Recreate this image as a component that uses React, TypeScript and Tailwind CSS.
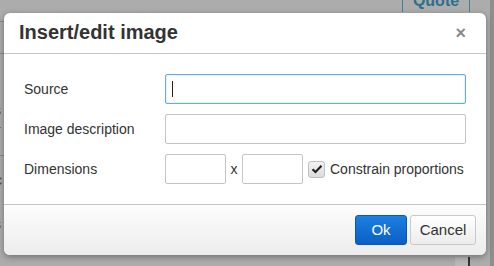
import React from "react";

export default function App() {
  const font = { fontFamily: '"Liberation Sans", Arial, sans-serif' };
  return (
    <div className="relative w-[494px] h-[266px] overflow-hidden bg-[#acacac]" style={font}>
      {/* background page bits */}
      <div className="absolute left-0 top-[21px] w-[4px] h-px bg-[#8a8a8a]" />
      <div className="absolute left-0 top-[53px] w-[4px] h-px bg-[#8a8a8a]" />
      <div className="absolute left-0 top-[155px] w-[4px] h-px bg-[#8a8a8a]" />
      <div className="absolute left-[-6px] top-[100px] text-[14px] text-[#444]">s</div>
      <div className="absolute left-[-4px] top-[120px] text-[14px] text-[#444]">r</div>
      <div className="absolute left-[-5px] top-[170px] text-[14px] text-[#444]">c</div>
      <div className="absolute left-[-6px] top-[214px] text-[14px] text-[#444]">s</div>
      <div className="absolute left-[402px] top-[-8px] w-[68px] h-[20px] border-x border-[#3e7f99] flex items-start justify-center">
        <span className="text-[16px] font-bold text-[#2f6f8c] leading-[16px] mt-[1px]">Quote</span>
      </div>
      <div className="absolute left-[490px] top-0 w-[4px] h-[266px] bg-[#8e8e8e]" />
      <div className="absolute left-[455px] top-[257px] w-[13px] h-[9px] bg-[#b8b8b8]" />
      <div className="absolute left-[468px] top-[257px] w-[2px] h-[9px] bg-[#333]" />

      {/* dialog */}
      <div className="absolute left-[4px] top-[13px] w-[482px] h-[242px] bg-white rounded-[6px] shadow-[0_2px_6px_rgba(0,0,0,0.35)] flex flex-col overflow-hidden">
        <div className="h-[41px] shrink-0 border-b border-[#c5c5c5] flex items-center justify-between pl-[15px] pr-[20px]">
          <span className="text-[20px] font-bold text-[#333] leading-none mt-[-2px]">Insert/edit image</span>
          <span className="text-[18px] font-bold text-[#8b8b8b] leading-none">×</span>
        </div>
        <div className="flex-1 flex flex-col gap-[10px] pt-[20px] pl-[20px] pr-[20px]">
          <div className="flex items-center h-[30px]">
            <span className="w-[141px] text-[14px] text-[#333]">Source</span>
            <div className="w-[301px] h-[30px] border border-[#6aaae0] rounded-[2px] shadow-[inset_0_0_2px_rgba(89,165,229,0.5)] flex items-center pl-[6px]">
              <div className="w-px h-[16px] bg-[#222]" />
            </div>
          </div>
          <div className="flex items-center h-[30px]">
            <span className="w-[141px] text-[14px] text-[#333]">Image description</span>
            <div className="w-[301px] h-[30px] border border-[#c5c5c5] rounded-[2px]" />
          </div>
          <div className="flex items-center h-[30px]">
            <span className="w-[141px] text-[14px] text-[#333]">Dimensions</span>
            <div className="w-[61px] h-[30px] border border-[#c5c5c5] rounded-[2px]" />
            <span className="w-[16px] text-center text-[14px] text-[#333]">x</span>
            <div className="w-[61px] h-[30px] border border-[#c5c5c5] rounded-[2px]" />
            <div className="ml-[5px] w-[17px] h-[17px] rounded-[3px] border border-[#c0c0c0] bg-gradient-to-b from-[#f2f2f2] to-[#dcdcdc] flex items-center justify-center">
              <svg width="12" height="10" viewBox="0 0 12 10">
                <path d="M1.5 5.2 L4.5 8 L10.5 1.8" fill="none" stroke="#222" strokeWidth="2.2" />
              </svg>
            </div>
            <span className="ml-[5px] text-[14px] text-[#333]">Constrain proportions</span>
          </div>
        </div>
        <div className="h-[51px] shrink-0 border-t border-[#c5c5c5] bg-gradient-to-b from-[#fdfdfd] to-[#ececec] flex items-center justify-end gap-[3px] pr-[10px]">
          <div className="w-[52px] h-[30px] rounded-[3px] border border-[#0a58b5] bg-gradient-to-b from-[#1c7fe2] to-[#0a5fc4] flex items-center justify-center text-[15px] text-white">Ok</div>
          <div className="w-[66px] h-[30px] rounded-[3px] border border-[#c9c9c9] bg-gradient-to-b from-[#ffffff] to-[#ececec] flex items-center justify-center text-[15px] text-[#333]">Cancel</div>
        </div>
      </div>
    </div>
  );
}
